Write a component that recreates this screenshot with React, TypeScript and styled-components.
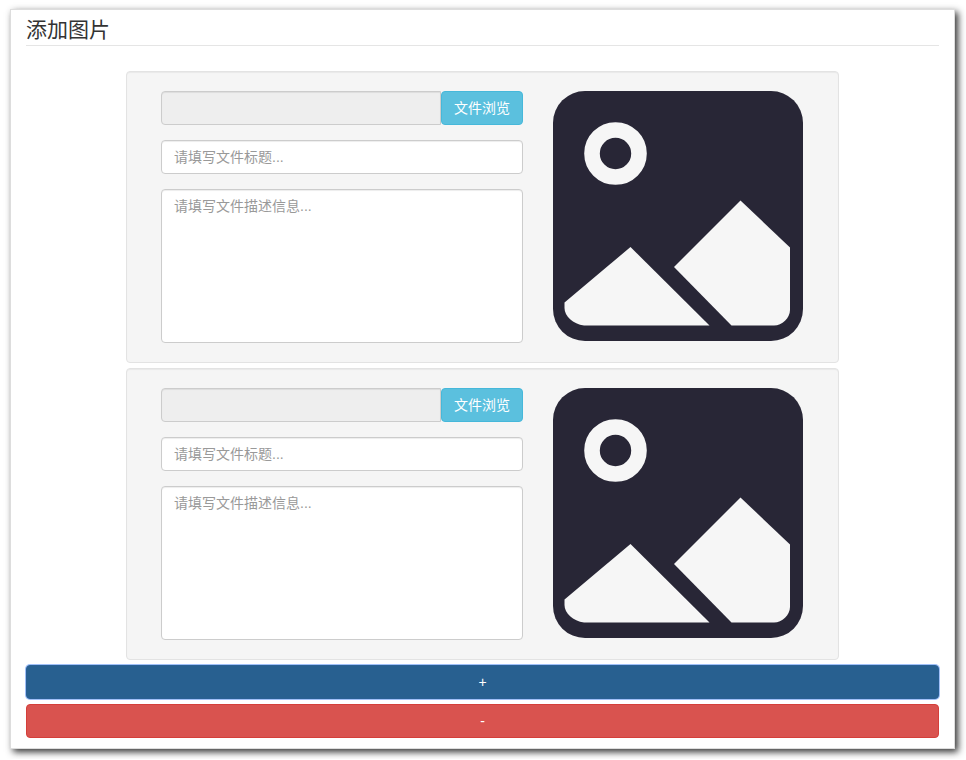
import React from "react";
import styled, { createGlobalStyle } from "styled-components";

const GlobalStyle = createGlobalStyle`
  *, *::before, *::after { box-sizing: border-box; }
  body {
    margin: 0;
    background: #fff;
    color: #333;
    font-family: "Liberation Sans", "Noto Sans CJK SC", sans-serif;
    font-size: 14px;
    line-height: 20px;
  }
  button, input, textarea { font: inherit; }
`;

const Panel = styled.main`
  display: flex;
  flex-direction: column;
  gap: 5px;
  margin: 9px 11px 10px 10px;
  padding: 0 15px 10px;
  background: #fff;
  border: 1px solid #ddd;
  box-shadow: 3px 3px 7px #333;
`;

const Title = styled.h1`
  margin: 0 0 20px;
  padding: 5px 0 0;
  border-bottom: 1px solid #e5e5e5;
  font-size: 21px;
  font-weight: 400;
  line-height: 30px;
`;

const Card = styled.section`
  display: grid;
  grid-template-columns: minmax(0, 1fr) 281px;
  margin: 0 100px;
  padding: 19px;
  background: #f5f5f5;
  border: 1px solid #e3e3e3;
  border-radius: 4px;
  box-shadow: inset 0 1px 1px rgba(0, 0, 0, 0.05);
`;

const Fields = styled.div`
  display: flex;
  flex-direction: column;
  gap: 15px;
  min-width: 0;
  padding: 0 15px;
`;

const FileRow = styled.div`
  display: flex;
`;

const TextInput = styled.input`
  flex: 1 1 auto;
  width: 100%;
  min-width: 0;
  height: 34px;
  padding: 6px 12px;
  background: #fff;
  border: 1px solid #ccc;
  border-radius: 4px;
  box-shadow: inset 0 1px 1px rgba(0, 0, 0, 0.075);
  color: #555;
  &::placeholder { color: #999; opacity: 1; }
  &:read-only {
    background: #eee;
    border-radius: 4px 0 0 4px;
  }
`;

const Description = styled.textarea`
  display: block;
  width: 100%;
  height: 154px;
  padding: 6px 12px;
  resize: none;
  background: #fff;
  border: 1px solid #ccc;
  border-radius: 4px;
  box-shadow: inset 0 1px 1px rgba(0, 0, 0, 0.075);
  color: #555;
  &::placeholder { color: #999; opacity: 1; }
`;

const Button = styled.button<{ $fill: string; $edge: string; $ring?: boolean }>`
  flex: none;
  height: 34px;
  padding: 6px 12px;
  background: ${(p) => p.$fill};
  border: 1px solid ${(p) => p.$edge};
  border-radius: 4px;
  color: #fff;
  text-align: center;
  white-space: nowrap;
  cursor: pointer;
  box-shadow: ${(p) => (p.$ring ? "0 0 0 1px #a0c0f8" : "none")};
`;

const Preview = styled.div`
  padding: 0 15px;
  svg { display: block; width: 250px; max-width: 100%; }
`;

function PicturePlaceholder() {
  return (
    <svg viewBox="0 0 250 250" role="img" aria-label="图片预览">
      <rect width="250" height="250" rx="32" fill="#282636" />
      <circle cx="62.5" cy="62.5" r="23.5" fill="none" stroke="#f6f6f6" strokeWidth="15.6" />
      <path fill="#f6f6f6" d="M77.5 156 156.5 234.5H31C20 233 11.500 225 11.500 217V211.500Z" />
      <path fill="#f6f6f6" d="M187.500 109.500 237 156.500V219C237 227 229 234.500 221 234.500H178.500L121 176Z" />
    </svg>
  );
}

function PictureForm({ index }: { index: number }) {
  return (
    <Card>
      <Fields>
        <FileRow>
          <TextInput type="text" readOnly aria-label={`文件 ${index}`} />
          <Button type="button" $fill="#5bc0de" $edge="#46b8da">文件浏览</Button>
        </FileRow>
        <TextInput type="text" placeholder="请填写文件标题..." aria-label={`文件标题 ${index}`} />
        <Description placeholder="请填写文件描述信息..." aria-label={`文件描述信息 ${index}`} />
      </Fields>
      <Preview>
        <PicturePlaceholder />
      </Preview>
    </Card>
  );
}

export default function App() {
  return (
    <>
      <GlobalStyle />
      <Panel>
        <Title>添加图片</Title>
        <PictureForm index={1} />
        <PictureForm index={2} />
        <Button type="button" $fill="#286090" $edge="#2a6094" $ring>+</Button>
        <Button type="button" $fill="#d9534f" $edge="#d43f3a">-</Button>
      </Panel>
    </>
  );
}
